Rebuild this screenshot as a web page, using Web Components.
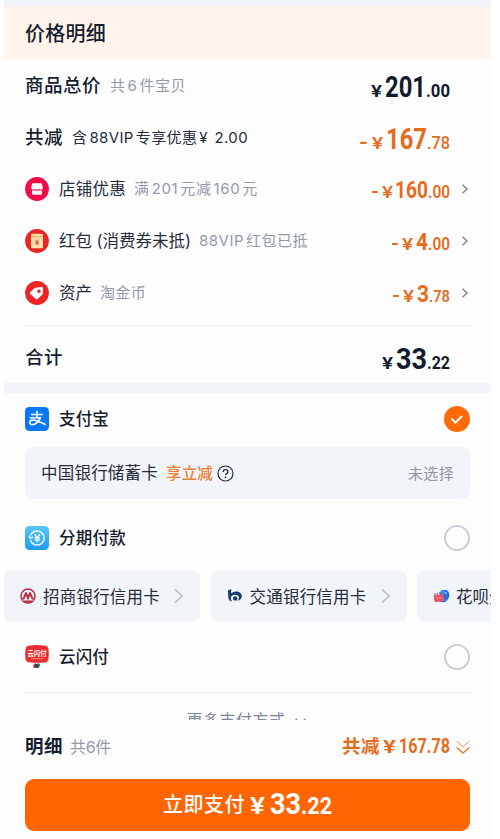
<!DOCTYPE html>
<html lang="zh-CN">
<head>
<meta charset="utf-8">
<title>价格明细</title>
<style>
html,body{margin:0;height:839px;overflow:hidden;background:#fff}
body{font-family:"Inter","Noto Sans CJK SC",sans-serif;color:#151d2e}
</style>
</head>
<body>
<checkout-page></checkout-page>
<script>
const define = (name, html, setup) => {
  const tpl = document.createElement('template');
  tpl.innerHTML = html;
  customElements.define(name, class extends HTMLElement {
    connectedCallback() {
      if (this.shadowRoot) return;
      this.attachShadow({ mode: 'open' }).appendChild(tpl.content.cloneNode(true));
      if (setup) setup(this, this.shadowRoot);
    }
  });
};

/* A run of text: s = size, k = weight, c = colour, w = set width reached by tracking */
define('ui-text', `<style>
:host{display:inline-block;white-space:nowrap;line-height:1.4;flex:none}
span{display:inline-block}
::slotted(i){font-style:normal;margin:0 2px}</style><span><slot></slot></span>`, (el, root) => {
  const g = n => el.getAttribute(n);
  if (g('s')) el.style.fontSize = g('s') + 'px';
  if (g('k')) el.style.fontWeight = g('k');
  if (g('c')) el.style.color = g('c');
  if (g('w')) {
    const natural = root.querySelector('span').getBoundingClientRect().width;
    el.style.letterSpacing = ((+g('w') - natural) / el.textContent.length) + 'px';
    el.style.width = g('w') + 'px';
  }
});

/* Condensed digits: w = width the run is squeezed into */
define('din-text', `<style>
:host{display:inline-block;white-space:nowrap;line-height:1;flex:none;font-family:Roboto,"Noto Sans CJK SC",sans-serif}
span{display:inline-block;transform-origin:0 50%}</style><span><slot></slot></span>`, (el, root) => {
  const g = n => el.getAttribute(n), sp = root.querySelector('span');
  el.style.fontSize = g('s') + 'px';
  el.style.fontWeight = g('k') || 700;
  const natural = sp.getBoundingClientRect().width;
  sp.style.transform = 'scaleX(' + (+g('w') / natural) + ')';
  el.style.width = g('w') + 'px';
});

define('price-tag', `<style>
:host{display:flex;align-items:baseline;margin-left:auto;color:#131a2c}
:host([off]){color:#e46c1c}</style><slot></slot>`);

define('ui-icon', `<style>:host{display:block;flex:none}svg{display:block;overflow:visible}</style><div></div>`, (el, root) => {
  root.querySelector('div').innerHTML = ICONS[el.getAttribute('name')];
});

define('bill-row', `<style>
:host{display:flex;align-items:center;height:52px;padding:0 41px 0 21px;box-sizing:border-box}
:host([more]){padding-right:21px}
.chev{margin-left:11px;margin-top:-1px;display:none}
:host([more]) .chev{display:block}</style><slot></slot><ui-icon class="chev" name="next"></ui-icon>`);

define('bank-chip', `<style>
:host{display:flex;align-items:center;flex:none;width:196px;height:52px;background:#f1f4f8;border-radius:8px;box-sizing:border-box;padding:0 16px}
ui-icon.n{margin-left:auto}slot{display:contents}</style><slot></slot><ui-icon class="n" name="chipnext"></ui-icon>`);

const ICONS = {
next:`<svg width="9" height="12" viewBox="0 0 9 12"><path d="M1.500 1.800 6.100 6 1.500 10.200" fill="none" stroke="#737f94" stroke-width="1.3"/></svg>`,
chipnext:`<svg width="10" height="16" viewBox="0 0 10 16"><path d="M1 1.5 8.3 8 1 14.5" fill="none" stroke="#c0c4cb" stroke-width="1.7"/></svg>`,
shop:`<svg width="24" height="24" viewBox="0 0 24 24"><circle cx="12" cy="12" r="11.9" fill="#f20a49"/><path d="M7.2 6.3h9.6l1.1 4.4q0 1.7-1.7 1.7-1.3 0-1.9-.5-.8.5-2.3.5t-2.3-.5q-.7.5-1.9.5-1.7 0-1.7-1.7z" fill="#fff"/><path d="M7 13.6q1.3.1 2.2-.3 1.1.5 2.8.5t2.8-.5q.9.4 2.2.3v2.900q0 1.2-1.2 1.2H8.200q-1.200 0-1.200-1.200z" fill="#fff"/></svg>`,
packet:`<svg width="24" height="24" viewBox="0 0 24 24"><circle cx="12" cy="12" r="11.9" fill="#ec2524"/><rect x="6" y="4.800" width="12" height="14.400" rx="1.300" fill="#ffe2ad"/><path d="M6.300 7.500Q12 8.700 17.700 7.500" stroke="#e99a52" fill="none"/><path d="m10.400 10.700 1.600 2.100 1.600-2.100M12 12.800v3.400M10.300 13.300h3.400M10.300 14.800h3.400" fill="none" stroke="#d94a2c" stroke-width="1"/></svg>`,
tag:`<svg width="24" height="24" viewBox="0 0 24 24"><circle cx="12" cy="12" r="11.9" fill="#ee2323"/><path d="m10.600 6.700 5.800-.8q1.700-.1 1.700 1.400l-.4 5.200q-.1.700-.6 1.200l-4.500 4.300q-.9.800-1.800 0l-5.500-4.900q-1-.9-.1-1.800l4.200-4.100q.5-.4 1.200-.5z" fill="#fff"/><circle cx="14" cy="10.200" r="1.700" fill="#ee2323"/></svg>`,
alipay:`<svg width="24" height="24" viewBox="0 0 24 24"><rect width="24" height="24" rx="4.500" fill="#0878fb"/><g fill="none" stroke="#fff" stroke-linecap="round"><path d="M6.500 7.500h10.700M5.300 10.800h10" stroke-width="1.500"/><path d="M12 4.700v6M15.300 10.800Q13.900 15 9.600 17.300 5.800 18.500 4.700 16q-.3-3 3.300-3 3.400.2 12 4.300" stroke-width="1.700"/></g></svg>`,
installment:`<svg width="24" height="24" viewBox="0 0 24 24"><defs><linearGradient id="g" x2="0" y2="1"><stop stop-color="#5ac5f4"/><stop offset="1" stop-color="#1d9df0"/></linearGradient></defs><rect width="24" height="24" rx="4.500" fill="url(#g)"/><g fill="none" stroke="#e9f8ff"><path d="M5.600 9.300A7 7 0 1 1 5.400 14.300" stroke-width="1.500"/><path d="m3.900 9.500 1.300 2.900 3-1.400" stroke-width="1.400"/><path d="m9.600 8.200 2.700 3.400L15 8.200M12.300 11.600v5M9.500 12h5.600M9.500 14.200h5.600" stroke-width="1.500"/></g></svg>`,
union:`<svg width="24" height="24" viewBox="0 0 24 24"><path d="M3.500.700Q12-.6 20.500.700q2.600.4 3 3.300.7 5.500 0 10.500-.4 2.400-2.800 2.700Q12 18.400 3.300 17.200.9 16.900.500 14.500q-.7-5 0-10.500.4-2.900 3-3.300z" fill="#e92d31"/><path d="M9.300 18.700h5.400l-.7 4H8.700z" fill="#1e354a"/><path d="m12.500 18.700h2.800l-1.500 4h-1.300z" fill="#188083"/><path d="m9 18.700-.8 2.300.7 1.700h1l1-4z" fill="#ce3440"/><text x="12" y="10.700" text-anchor="middle" font-size="7.200" font-weight="700" fill="#fff" textLength="19" lengthAdjust="spacingAndGlyphs" font-family="Noto Sans CJK SC">云闪付</text><path d="M6 13.700h12" stroke="#f7a6a5" stroke-width="1" stroke-dasharray="1.500 .500"/></svg>`,
on:`<svg width="26" height="26" viewBox="0 0 26 26"><circle cx="13" cy="13" r="13" fill="#ff6906"/><path d="m7.500 12.700 4 3.800 6.700-6.500" fill="none" stroke="#fff" stroke-width="2"/></svg>`,
off:`<svg width="26" height="26" viewBox="0 0 26 26"><circle cx="13" cy="13" r="12" fill="none" stroke="#ccced7" stroke-width="2"/></svg>`,
help:`<svg width="17" height="17" viewBox="0 0 17 17"><circle cx="8.500" cy="8.500" r="7.500" fill="none" stroke="#262d3c" stroke-width="1.200"/><path d="M6.100 6.900Q6.100 4.600 8.500 4.600t2.400 2.100q0 1.200-1.300 1.900-1.100.6-1.100 1.700" fill="none" stroke="#262d3c" stroke-width="1.300"/><circle cx="8.500" cy="12.300" r=".9" fill="#262d3c"/></svg>`,
cmb:`<svg width="16" height="16" viewBox="0 0 16 16"><circle cx="8" cy="8" r="7" fill="none" stroke="#b72d45" stroke-width="1.500"/><path d="m2 11.800 3.300-7.600h1.500L8 7.500l1.200-3.300h1.500l3.300 7.600h-2.200L10 7.500l-1.400 4.300H7.400L6 7.500l-1.800 4.300z" fill="#b72d45"/><path d="M1.500 12h13l-2 2.200h-9z" fill="#b72d45"/><path d="M2.500 12.100h11" stroke="#f1f4f8" stroke-width=".8"/></svg>`,
bocom:`<svg width="16" height="16" viewBox="0 0 16 16"><path d="M.8 2.600 4.200 1v4.200Q7 2.800 10.500 3.600q4.400 1.300 4.300 4.900-.2 3.500-4.600 4.200 2.300-1.700 1.900-3.700Q11 6.700 8.200 6.700 4.300 6.900 3.900 9.500q-.1 2.200 1.300 4Q1.500 13 1.300 9z" fill="#173d6e"/><circle cx="8.200" cy="10.400" r="2.200" fill="#173d6e"/></svg>`,
huabei:`<svg width="17" height="16" viewBox="0 0 17 16"><path d="M9.500 2.300Q14 .3 16 5q1.300 6-4 9-4 .6-6-1V8z" fill="#1c70e8"/><path d="M8 2.300q3-.8 4 1.700l-1 3L7 5z" fill="#3b8ef3"/><circle cx="13" cy="5" r=".8" fill="#fff"/><path d="M.7 7.200 10.500 6l1.300 6.800-9.600 1.500Q.5 12 .7 7.200z" fill="#e65368"/><path d="M2 7V5.500M4.500 6.500V5M7 6V4" stroke="#555a9f" stroke-width="1.300"/><path d="M3 10h6" stroke="#f49cab" stroke-width=".9"/></svg>`,
down2:`<svg width="14" height="15" viewBox="0 0 14 15"><path d="m.7 1.200 6.300 5.500 6.300-5.500" fill="none" stroke="#f3bd9b" stroke-width="1.400"/><path d="m.7 7.500 6.300 5.500 6.300-5.500" fill="none" stroke="#e27c3a" stroke-width="1.500"/></svg>`,
down:`<svg width="11" height="8" viewBox="0 0 11 8"><path d="m.6.800 4.900 5 4.900-5" fill="none" stroke="#7d879a" stroke-width="1.300"/></svg>`
};

define('pay-option', `<style>
:host{display:flex;align-items:center;height:52px;padding:0 21px;box-sizing:border-box}
.t{display:flex;margin-left:10px;padding-top:2px}.r{margin-left:auto}</style>
<slot name="icon"></slot><div class="t"><slot></slot></div><div class="r"><slot name="radio"></slot></div>`);

define('checkout-page', `<style>
:host{display:block;width:487px;height:839px;margin-left:4px;background:#fdfdfe;overflow:hidden}
.top{height:7px;background:#f0f4fa}
.banner{height:52px;background:#fff3eb;display:flex;align-items:center;padding:2px 21px 0;box-sizing:border-box}
.bill{height:261px}
.bill ui-icon{margin-top:-1px}
.sub{margin-left:9px;margin-top:-1px}
.ic{margin-right:10px}
.line{height:1px;background:#e9ecef;margin:0 21px}
.total{height:57px;display:flex;align-items:center;padding:7px 41px 0 21px;box-sizing:border-box}
.band{height:10px;background:#f0f3f7}
.card{margin:2px 21px 0;height:52px;background:#f1f4f8;border-radius:8px;display:flex;align-items:center;padding:0 16px;box-sizing:border-box}
.card ui-text{padding-top:1px}
.chips{display:flex;gap:10.500px;margin-top:6px;overflow:hidden}
.chips ui-text{margin-left:7px;padding-top:3px}
.more{height:18px;margin-top:9px;overflow:hidden;display:flex;align-items:flex-start;justify-content:center;box-sizing:border-box;padding:7px 3px 0 0;gap:9px}
.more ui-icon{margin-top:9px}
.foot{height:52px;margin-top:1px;display:flex;align-items:center;padding:0 21px;box-sizing:border-box}
.pay{margin:6px 21px 0;height:52px;border-radius:9px;background:#ff6502;color:#fff;display:flex;align-items:baseline;padding-left:138px;box-sizing:border-box}
.pay din-text{position:relative;top:2px}
</style>
<div class="top"></div>
<div class="banner"><ui-text s="20" k="500" w="81">价格明细</ui-text></div>
<div class="bill">
<bill-row style="padding-top:1px"><ui-text s="18.500" k="500" w="76">商品总价</ui-text><ui-text class="sub" s="15" c="#929aaa" w="76">共<i>6</i>件宝贝</ui-text>
 <price-tag style="padding-top:4px"><din-text s="17" k="600" w="11" style="margin-right:3px">¥</din-text><din-text s="29" w="41">201</din-text><din-text s="17.500" w="24">.00</din-text></price-tag></bill-row>
<bill-row style="padding-top:1px"><ui-text s="18.500" k="500" w="38">共减</ui-text><ui-text class="sub" s="15" c="#262d3c" w="176">含<i>88VIP</i>专享优惠<i>¥</i> 2.00</ui-text>
 <price-tag off style="padding-top:4px"><din-text s="20" w="9" style="margin-right:4px">-</din-text><din-text s="17" k="500" w="11" style="margin-right:3px">¥</din-text><din-text s="29" w="41">167</din-text><din-text s="17.500" k="500" w="23">.78</din-text></price-tag></bill-row>
<bill-row more><ui-icon class="ic" name="shop"></ui-icon><ui-text s="16.500" c="#262d3c" w="67" style="padding-top:2px">店铺优惠</ui-text><ui-text class="sub" style="margin-left:8px" s="15" c="#929aaa" w="124">满<i>201</i>元减<i>160</i>元</ui-text>
 <price-tag off style="padding-top:4px"><din-text s="18" w="8" style="margin-right:3px">-</din-text><din-text s="17" w="11" k="500" style="margin-right:2px">¥</din-text><din-text s="23.500" w="33">160</din-text><din-text s="17.500" k="600" w="22">.00</din-text></price-tag></bill-row>
<bill-row more><ui-icon class="ic" name="packet"></ui-icon><ui-text s="16.500" c="#262d3c" w="132" style="padding-top:2px">红包 (消费券未抵)</ui-text><ui-text class="sub" style="margin-left:8px" s="15" c="#929aaa" w="109"><i style="margin-left:0">88VIP</i>红包已抵</ui-text>
 <price-tag off style="padding-top:4px"><din-text s="18" w="8" style="margin-right:3px">-</din-text><din-text s="17" w="11" k="500" style="margin-right:3px">¥</din-text><din-text s="23.500" w="12">4</din-text><din-text s="17.500" k="600" w="22">.00</din-text></price-tag></bill-row>
<bill-row more><ui-icon class="ic" name="tag"></ui-icon><ui-text s="16.500" c="#262d3c" w="33" style="padding-top:2px">资产</ui-text><ui-text class="sub" style="margin-left:8px" s="15" c="#929aaa" w="46">淘金币</ui-text>
 <price-tag off style="padding-top:4px"><din-text s="18" w="8" style="margin-right:3px">-</din-text><din-text s="17" w="11" k="500" style="margin-right:3px">¥</din-text><din-text s="23.500" w="12">3</din-text><din-text s="16.500" k="600" w="21">.78</din-text></price-tag></bill-row>
</div>
<div class="line" style="margin-top:5px"></div>
<div class="total"><ui-text s="18.500" k="500" w="38">合计</ui-text>
 <price-tag style="padding-top:2px"><din-text s="17" k="600" w="11" style="margin-right:3px">¥</din-text><din-text s="29" w="31">33</din-text><din-text s="17.500" w="23">.22</din-text></price-tag></div>
<div class="band"></div>
<pay-option><ui-icon slot="icon" name="alipay"></ui-icon><ui-text s="16.500" k="500" w="50">支付宝</ui-text><ui-icon slot="radio" name="on"></ui-icon></pay-option>
<div class="card"><ui-text s="16.500" c="#262d3c" w="117" style="padding-top:2px">中国银行储蓄卡</ui-text><ui-text style="margin-left:8px" s="15.500" k="500" c="#eb8137" w="47">享立减</ui-text><ui-icon style="margin-left:4px" name="help"></ui-icon><ui-text style="margin-left:auto" s="15" c="#8e97a8" w="46">未选择</ui-text></div>
<pay-option style="margin-top:13px"><ui-icon slot="icon" name="installment"></ui-icon><ui-text s="16.500" k="500" w="67">分期付款</ui-text><ui-icon slot="radio" name="off"></ui-icon></pay-option>
<div class="chips"><bank-chip><ui-icon name="cmb"></ui-icon><ui-text s="16.500" c="#262d3c" w="117">招商银行信用卡</ui-text></bank-chip>
<bank-chip><ui-icon name="bocom"></ui-icon><ui-text s="16.500" c="#262d3c" w="117">交通银行信用卡</ui-text></bank-chip>
<bank-chip><ui-icon name="huabei"></ui-icon><ui-text s="16.500" c="#262d3c" w="66" style="margin-left:6px">花呗分期</ui-text></bank-chip></div>
<pay-option style="margin-top:9px"><ui-icon slot="icon" name="union"></ui-icon><ui-text s="16.500" k="500" w="50">云闪付</ui-text><ui-icon slot="radio" name="off"></ui-icon></pay-option>
<div class="line" style="margin-top:9px"></div>
<div class="more"><ui-text s="16" c="#7d879a" w="99">更多支付方式</ui-text><ui-icon name="down"></ui-icon></div>
<div class="foot"><ui-text s="18.500" k="600" w="38">明细</ui-text><ui-text style="margin-left:7px" s="16" c="#929aaa" w="41">共6件</ui-text>
<price-tag off><ui-text s="18.500" k="600" w="38">共减</ui-text><din-text s="19" k="600" w="13" style="margin:0 3px 0 3px">¥</din-text><din-text s="19.500" w="51">167.78</din-text></price-tag><ui-icon style="margin-left:6px" name="down2"></ui-icon></div>
<div class="pay"><ui-text s="20" k="500" w="82" style="margin-top:12px">立即支付</ui-text><din-text s="23" k="600" w="15" style="margin:0 5px 0 5px">¥</din-text><din-text s="29.500" w="31">33</din-text><din-text s="23.500" w="31">.22</din-text></div>
`);
</script>
</body>
</html>
